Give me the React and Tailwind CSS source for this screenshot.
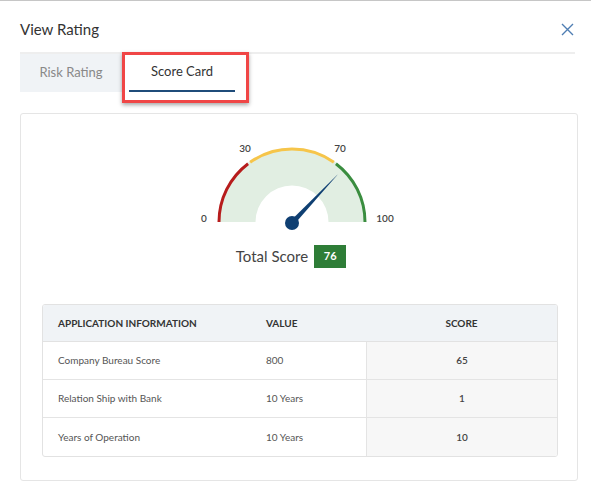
import { useState } from "react";

const rows = [
  { label: "Company Bureau Score", value: "800", score: "65" },
  { label: "Relation Ship with Bank", value: "10 Years", score: "1" },
  { label: "Years of Operation", value: "10 Years", score: "10" },
];

// gauge geometry (svg coords)
const CX = 110;
const CY = 82;
const R_OUT = 74;
const R_IN = 36.5;

const pt = (r, deg) => {
  const a = (deg * Math.PI) / 180;
  return [CX + r * Math.cos(a), CY - r * Math.sin(a)];
};

const arc = (r, from, to) => {
  const [x1, y1] = pt(r, from);
  const [x2, y2] = pt(r, to);
  return `M ${x1} ${y1} A ${r} ${r} 0 0 1 ${x2} ${y2}`;
};

function Gauge({ score }) {
  const fill = `M ${CX - R_OUT} ${CY} A ${R_OUT} ${R_OUT} 0 0 1 ${CX + R_OUT} ${CY} L ${CX + R_IN} ${CY} A ${R_IN} ${R_IN} 0 0 0 ${CX - R_IN} ${CY} Z`;
  const ang = 180 - (score / 100) * 180 + 3;
  const [tx, ty] = pt(67, ang);
  const [b1x, b1y] = pt(2.6, ang + 90);
  const [b2x, b2y] = pt(2.6, ang - 90);

  return (
    <svg width="220" height="94" viewBox="0 0 220 94">
      <path d={fill} fill="#e1eee2" />
      <path d={arc(73, 180, 127)} stroke="#b71c1c" strokeWidth="3" fill="none" />
      <path d={arc(73, 125, 55)} stroke="#f6c54a" strokeWidth="3" fill="none" />
      <path d={arc(73, 53, 0)} stroke="#3a8d3f" strokeWidth="3" fill="none" />
      <polygon points={`${b1x},${b1y + 1} ${tx},${ty} ${b2x},${b2y + 1}`} fill="#0f3f72" />
      <circle cx={CX} cy={CY + 1} r="7" fill="#0f3f72" />
      <g fontSize="10" fontWeight="600" fill="#444" textAnchor="middle" dominantBaseline="middle">
        <text x="22" y="79">0</text>
        <text x="63" y="9">30</text>
        <text x="158" y="9">70</text>
        <text x="203" y="79">100</text>
      </g>
    </svg>
  );
}

export default function App() {
  const [tab, setTab] = useState("score");

  return (
    <div className="min-h-screen bg-white border-t border-[#c6c6c6] font-['Lato','Noto_Sans',sans-serif] text-[#333]">
      {/* header */}
      <div className="flex items-center justify-between ml-5 mr-4 h-[53px] pt-[6px] border-b-2 border-[#eeeeee]">
        <h1 className="text-[15px] text-[#333]">View Rating</h1>
        <button className="w-[13px] h-[13px] mr-[1px]">
          <svg viewBox="0 0 13 13" width="13" height="13">
            <path d="M1 1 L12 12 M12 1 L1 12" stroke="#4f7eb3" strokeWidth="1.4" fill="none" />
          </svg>
        </button>
      </div>

      {/* tabs */}
      <div className="relative flex ml-5 h-[38px]">
        <button
          onClick={() => setTab("risk")}
          className="w-[102px] h-full bg-[#f0f3f6] text-[13px] text-[#888]"
        >
          Risk Rating
        </button>
        <div className="w-[120px] h-full px-[7px]">
          <button
            onClick={() => setTab("score")}
            className={`w-full h-full text-[13px] text-[#333] border-b-2 ${tab === "score" ? "border-[#1f4c7a]" : "border-transparent"}`}
          >
            Score Card
          </button>
        </div>
        <div className="absolute left-[102px] top-[-2px] w-[127px] h-[51px] border-[3px] border-[#f04646] shadow-[0_2px_4px_rgba(0,0,0,0.35)] pointer-events-none" />
      </div>

      {/* card */}
      <div className="ml-5 mr-[13px] mt-[21px] border border-[#e5e5e5] rounded-[3px] pt-[26px] pb-[23px] pl-[21px] pr-[19px]">
        <div className="flex justify-center pr-[16px]">
          <Gauge score={76} />
        </div>
        <div className="flex items-center justify-center gap-[6px] mt-[11px] pr-[18px]">
          <span className="text-[15px] text-[#444]">Total Score</span>
          <span className="w-[32px] h-[23px] flex items-center justify-center bg-[#2e7d37] text-white text-[11px] font-bold">
            76
          </span>
        </div>

        <div className="mt-[36px] border border-[#e2e2e2] rounded-[3px] overflow-hidden text-[10px]">
          <div className="flex h-[37px] items-center bg-[#f0f3f6] border-b border-[#e2e2e2] font-bold text-[#333] uppercase">
            <div className="w-[208px] pl-[15px]">Application Information</div>
            <div className="w-[115px] pl-[15px]">Value</div>
            <div className="flex-1 text-center">Score</div>
          </div>
          {rows.map((r, i) => (
            <div
              key={r.label}
              className={`flex h-[38px] ${i < rows.length - 1 ? "border-b border-[#e4e4e4]" : ""}`}
            >
              <div className="w-[208px] pl-[15px] flex items-center text-[#555]">{r.label}</div>
              <div className="w-[115px] pl-[15px] flex items-center text-[#555]">{r.value}</div>
              <div className="flex-1 flex items-center justify-center bg-[#f7f7f7] border-l border-[#e4e4e4] font-semibold text-[#444]">
                {r.score}
              </div>
            </div>
          ))}
        </div>
      </div>
    </div>
  );
}
